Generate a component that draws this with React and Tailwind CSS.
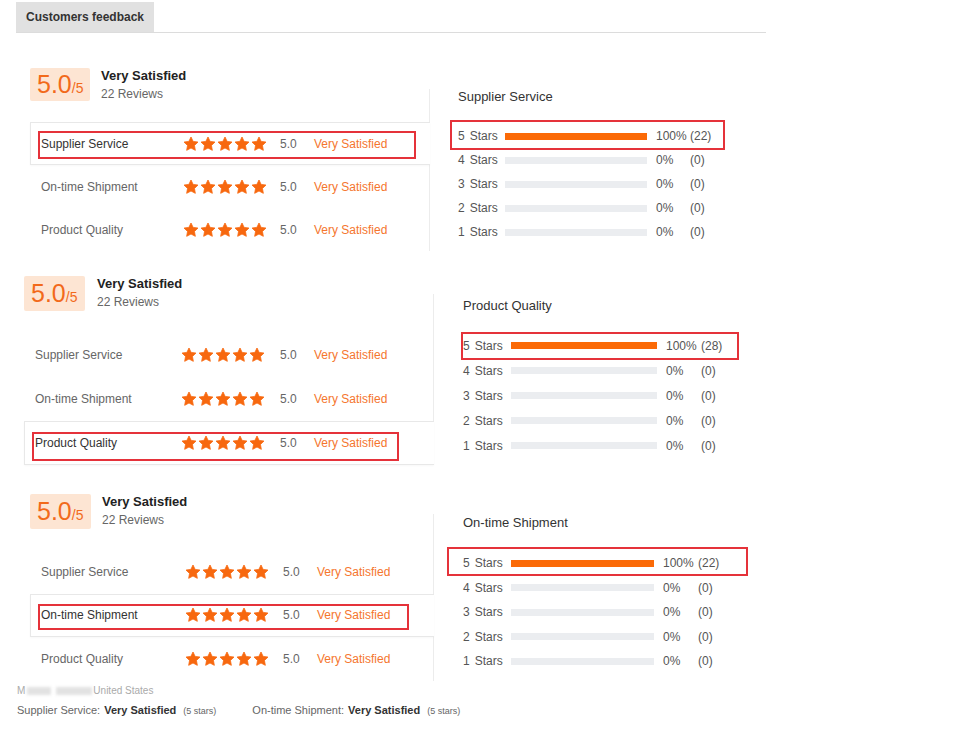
import React from "react";

const Star = () => (
  <svg width="16" height="16" viewBox="0 0 24 24" className="shrink-0">
    <polygon
      points="12,1.5 15.2,8.1 22.5,9.1 17.2,14.2 18.5,21.5 12,18 5.5,21.5 6.8,14.2 1.5,9.1 8.8,8.1"
      fill="#f7680f"
      stroke="#f7680f"
      strokeWidth="1.2"
      strokeLinejoin="round"
    />
  </svg>
);

const Stars = () => (
  <div className="flex gap-[1px]">
    <Star />
    <Star />
    <Star />
    <Star />
    <Star />
  </div>
);

const panels = [
  {
    wrap: "mt-[35px] ml-[30px]",
    leftW: "w-[399px]",
    box: "w-[60px] h-[33px]",
    headH: "h-[33px]",
    textGap: "ml-[11px]",
    tableMt: "mt-[21px]",
    rowH: "h-[43px]",
    labelW: "w-[142px]",
    numMl: "ml-[13px]",
    highlight: 0,
    redLeft: "left-[7px] top-[8px] w-[378px] h-[28px]",
    colPad: "pl-[28px] pt-0",
    title: "Supplier Service",
    titleMb: "mb-[19px]",
    barRowH: "h-[24px]",
    barLabelW: "w-[47px]",
    barW: "w-[142px]",
    pctW: "w-[34px]",
    count: "(22)",
    redRight: "-left-[8px] -top-[4px] w-[275px] h-[30px]",
  },
  {
    wrap: "mt-[25px] ml-[24px]",
    leftW: "w-[409px]",
    box: "w-[61px] h-[35px]",
    headH: "h-[35px]",
    textGap: "ml-[12px]",
    tableMt: "mt-[22px]",
    rowH: "h-[44px]",
    labelW: "w-[146px]",
    numMl: "ml-[15px]",
    highlight: 2,
    redLeft: "left-[7px] top-[10px] w-[367px] h-[29px]",
    colPad: "pl-[29px] pt-[4px]",
    title: "Product Quality",
    titleMb: "mb-[19px]",
    barRowH: "h-[25px]",
    barLabelW: "w-[48px]",
    barW: "w-[146px]",
    pctW: "w-[35px]",
    count: "(28)",
    redRight: "-left-[2px] -top-[1px] w-[278px] h-[28px]",
  },
  {
    wrap: "mt-[29px] ml-[30px]",
    leftW: "w-[403px]",
    box: "w-[61px] h-[35px]",
    headH: "h-[35px]",
    textGap: "ml-[11px]",
    tableMt: "mt-[21px]",
    rowH: "h-[43.5px]",
    labelW: "w-[144px]",
    numMl: "ml-[14px]",
    highlight: 1,
    redLeft: "left-[7px] top-[9px] w-[371px] h-[26px]",
    colPad: "pl-[29px] pt-[1px]",
    title: "On-time Shipment",
    titleMb: "mb-[20px]",
    barRowH: "h-[24.5px]",
    barLabelW: "w-[48px]",
    barW: "w-[143px]",
    pctW: "w-[35px]",
    count: "(22)",
    redRight: "-left-[16px] -top-[4px] w-[301px] h-[29px]",
  },
];

const rowNames = ["Supplier Service", "On-time Shipment", "Product Quality"];

function Panel({ p }) {
  return (
    <div className={`flex items-end ${p.wrap}`}>
      <div className={`${p.leftW} flex flex-col shrink-0`}>
        <div className={`flex items-start ${p.headH}`}>
          <div className={`${p.box} bg-[#fde5d3] flex items-center pl-[7px] rounded-[2px]`}>
            <span className="text-[25px] leading-none text-[#f26a1b]">5.0</span>
            <span className="text-[14px] leading-none text-[#f26a1b] mt-[6px]">/5</span>
          </div>
          <div className={`${p.textGap} flex flex-col`}>
            <span className="text-[13px] leading-[16px] font-bold text-[#222]">Very Satisfied</span>
            <span className="text-[12px] leading-[14px] text-[#666] mt-[3px]">22 Reviews</span>
          </div>
        </div>
        <div className={`${p.tableMt} flex flex-col`}>
          {rowNames.map((name, i) => {
            const hl = i === p.highlight;
            return (
              <div
                key={name}
                className={
                  hl
                    ? `${p.rowH} relative z-10 -mr-[1px] bg-white border-y border-l border-[#e8e8e8] flex items-center pl-[10px] shadow-[0_1px_2px_rgba(0,0,0,0.03)]`
                    : `${p.rowH} flex items-center pl-[11px]`
                }
              >
                <span className={`${p.labelW} text-[12px] ${hl ? "text-[#333]" : "text-[#666]"}`}>{name}</span>
                <Stars />
                <span className={`${p.numMl} w-[34px] text-[12px] text-[#666]`}>5.0</span>
                <span className="text-[12px] text-[#f5762e]">Very Satisfied</span>
                {hl && <div className={`absolute ${p.redLeft} border-2 border-[#e5323a]`} />}
              </div>
            );
          })}
        </div>
      </div>
      <div className={`border-l border-[#ececec] ${p.colPad} pb-[7px] flex flex-col`}>
        <div className={`text-[13px] leading-[16px] text-[#333] ${p.titleMb}`}>{p.title}</div>
        {[5, 4, 3, 2, 1].map((n) => (
          <div key={n} className={`${p.barRowH} relative flex items-center text-[12px] text-[#555]`}>
            <span className={`${p.barLabelW} flex`}>
              <span>{n}</span>
              <span className="ml-[5px]">Stars</span>
            </span>
            <div className={`${p.barW} h-[7px] ${n === 5 ? "bg-[#fb6a07]" : "bg-[#ebedf0]"}`} />
            <span className={`ml-[9px] ${p.pctW}`}>{n === 5 ? "100%" : "0%"}</span>
            <span>{n === 5 ? p.count : "(0)"}</span>
            {n === 5 && <div className={`absolute ${p.redRight} border-2 border-[#e5323a]`} />}
          </div>
        ))}
      </div>
    </div>
  );
}

export default function App() {
  return (
    <div className="w-[957px] h-[730px] bg-white overflow-hidden font-['Liberation_Sans',Arial,sans-serif]">
      <div className="ml-[16px] mt-[2px] w-[750px] border-b border-[#dcdcdc]">
        <div className="w-[138px] h-[30px] bg-[#e1e1e1] flex items-center pl-[10px]">
          <span className="text-[12px] font-bold text-[#333]">Customers feedback</span>
        </div>
      </div>
      {panels.map((p, i) => (
        <Panel key={i} p={p} />
      ))}
      <div className="ml-[17px] mt-[4px] flex items-center text-[10px] leading-[12px] text-[#aaa]">
        <span>M</span>
        <span className="ml-[2px] w-[24px] h-[8px] bg-[#e2e2e2] blur-[1.5px]" />
        <span className="ml-[5px] w-[36px] h-[8px] bg-[#e2e2e2] blur-[1.5px]" />
        <span className="ml-[1px]">United States</span>
      </div>
      <div className="ml-[17px] mt-[5px] flex items-baseline text-[11px] text-[#666]">
        <span>Supplier Service:</span>
        <span className="ml-[4px] font-bold text-[#333]">Very Satisfied</span>
        <span className="ml-[7px] text-[9px] text-[#666]">(5 stars)</span>
        <span className="ml-[36px]">On-time Shipment:</span>
        <span className="ml-[4px] font-bold text-[#333]">Very Satisfied</span>
        <span className="ml-[7px] text-[9px] text-[#666]">(5 stars)</span>
      </div>
    </div>
  );
}
